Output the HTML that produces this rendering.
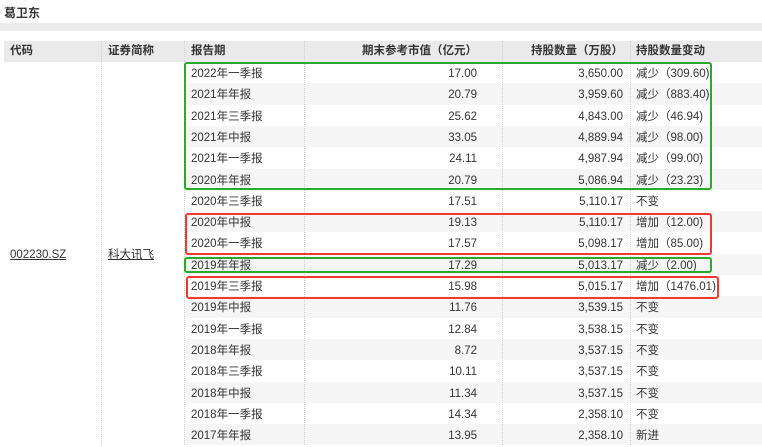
<!DOCTYPE html>
<html><head><meta charset="utf-8"><style>
*{margin:0;padding:0;box-sizing:border-box}
body{width:762px;height:445px;overflow:hidden;background:#fff;font-family:"Liberation Sans","Noto Sans CJK SC",sans-serif;font-size:11.5px;color:#333;position:relative}
.a{position:absolute}
.t{left:4px;top:4px;font-weight:bold;font-size:12px;color:#333}
.band{left:0;top:23px;width:762px;height:8px;background:#ebebeb}
.hdr{left:4px;top:41px;width:758px;height:21px;background:#eaeaea}
.row{left:184px;width:578px;height:21.3px}
.g{background:#f5f5f5}
.vl{top:41px;height:404px;border-left:1px dotted #d0d0d0}
.c{position:absolute;line-height:21px;white-space:nowrap;margin-top:2px}
.r{text-align:right}
.box{position:absolute;border:2px solid;border-radius:3px;z-index:5}
</style></head><body>
<div class="a t">葛卫东</div>
<div class="a band"></div>
<div class="a hdr"></div>
<div id="rows"></div>
<div class="a vl" style="left:101px"></div>
<div class="a vl" style="left:184px"></div>
<div class="a vl" style="left:304px"></div>
<div class="a vl" style="left:502px"></div>
<div class="a vl" style="left:630px"></div>
<div class="c" style="left:10px;top:39px;font-weight:bold">代码</div>
<div class="c" style="left:108px;top:39px;font-weight:bold">证券简称</div>
<div class="c" style="left:191px;top:39px;font-weight:bold">报告期</div>
<div class="c r" style="right:285px;top:39px;font-weight:bold">期末参考市值（亿元）</div>
<div class="c r" style="right:139px;top:39px;font-weight:bold">持股数量（万股）</div>
<div class="c" style="left:636px;top:39px;font-weight:bold">持股数量变动</div>
<div class="c" style="left:10px;top:243px;text-decoration:underline">002230.SZ</div>
<div class="c" style="left:108px;top:243px;text-decoration:underline">科大讯飞</div>
<script>
var d=[["2022年一季报","17.00","3,650.00","减少（309.60)"],["2021年年报","20.79","3,959.60","减少（883.40)"],["2021年三季报","25.62","4,843.00","减少（46.94)"],["2021年中报","33.05","4,889.94","减少（98.00)"],["2021年一季报","24.11","4,987.94","减少（99.00)"],["2020年年报","20.79","5,086.94","减少（23.23)"],["2020年三季报","17.51","5,110.17","不变"],["2020年中报","19.13","5,110.17","增加（12.00)"],["2020年一季报","17.57","5,098.17","增加（85.00)"],["2019年年报","17.29","5,013.17","减少（2.00)"],["2019年三季报","15.98","5,015.17","增加（1476.01)"],["2019年中报","11.76","3,539.15","不变"],["2019年一季报","12.84","3,538.15","不变"],["2018年年报","8.72","3,537.15","不变"],["2018年三季报","10.11","3,537.15","不变"],["2018年中报","11.34","3,537.15","不变"],["2018年一季报","14.34","2,358.10","不变"],["2017年年报","13.95","2,358.10","新进"]];
var h="";d.forEach(function(r,i){var y=62+21.3*i;
h+='<div class="a row'+(i%2?' g':'')+'" style="top:'+y+'px"></div>';
h+='<div class="c" style="left:191px;top:'+y+'px">'+r[0]+'</div>';
h+='<div class="c r" style="right:285px;top:'+y+'px">'+r[1]+'</div>';
h+='<div class="c r" style="right:139px;top:'+y+'px">'+r[2]+'</div>';
h+='<div class="c" style="left:636px;top:'+y+'px">'+r[3]+'</div>';});
h+='<div class="box" style="left:184px;top:62px;width:528px;height:128px;border-color:#2aaa2a"></div>';
h+='<div class="box" style="left:185px;top:213px;width:527px;height:42px;border-color:#f03a2e"></div>';
h+='<div class="box" style="left:184px;top:257px;width:528px;height:16px;border-color:#2aaa2a"></div>';
h+='<div class="box" style="left:186px;top:276px;width:533px;height:23px;border-color:#f03a2e"></div>';
document.getElementById("rows").innerHTML=h;
</script>
</body></html>
